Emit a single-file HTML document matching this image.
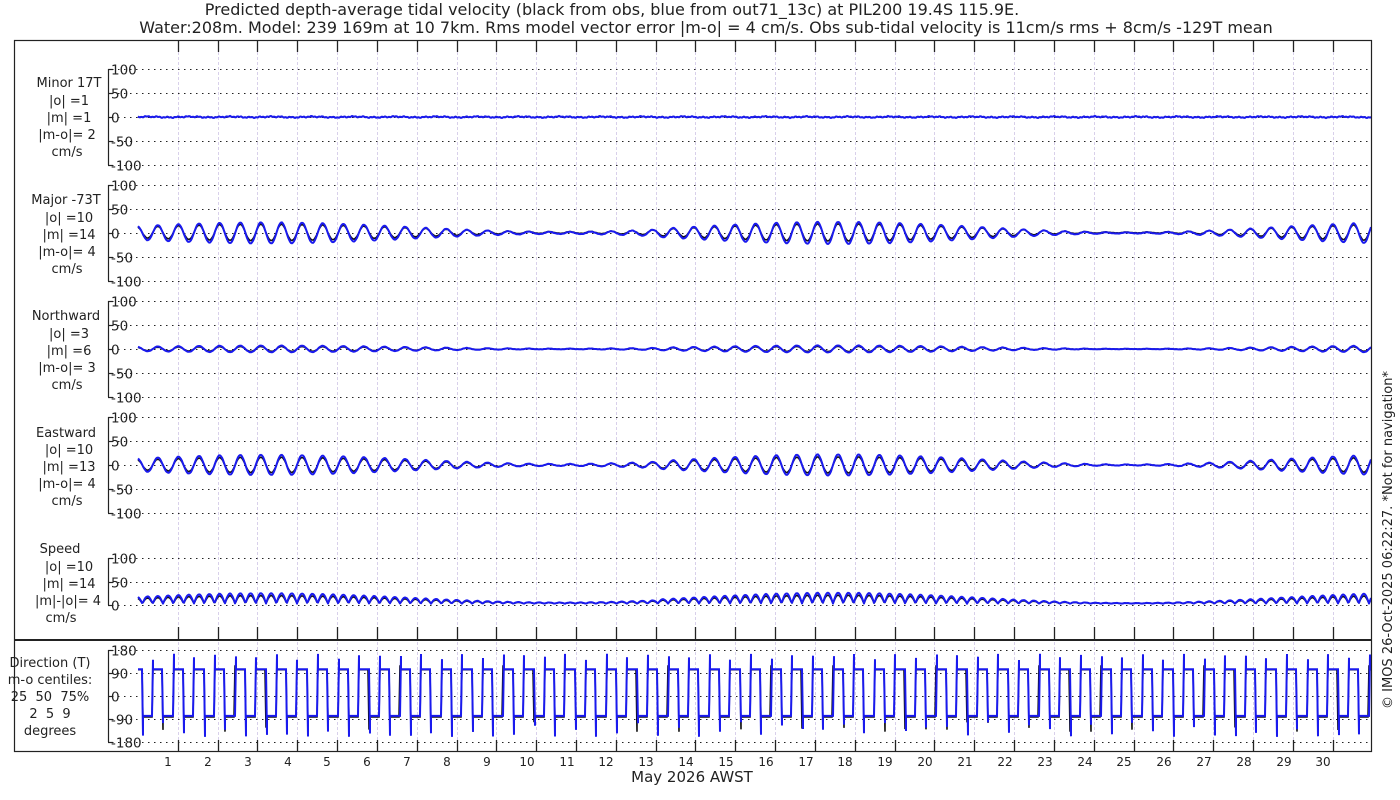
<!DOCTYPE html>
<html><head><meta charset="utf-8"><style>
html,body{margin:0;padding:0;background:#fff;width:1400px;height:800px;overflow:hidden}
svg{display:block;font-family:"DejaVu Sans","Liberation Sans",sans-serif}
</style></head><body>
<svg id="s" width="1400" height="800" viewBox="0 0 1400 800" xmlns="http://www.w3.org/2000/svg">
<rect width="1400" height="800" fill="#fff"/>
<g id="grid"></g>
<g id="data"></g>
<rect x="14.5" y="40.5" width="1357" height="711" fill="none" stroke="#222" stroke-width="1.2"/>
<line x1="14" y1="640" x2="1371" y2="640" stroke="#222" stroke-width="2"/>
<g id="axes" stroke="#222" fill="none"></g>
<g font-size="16" fill="#222" text-anchor="middle">
<text x="612" y="15">Predicted depth-average tidal velocity (black from obs, blue from out71_13c) at PIL200 19.4S 115.9E.</text>
<text x="706" y="33">Water:208m. Model: 239 169m at 10 7km. Rms model vector error |m-o| = 4 cm/s. Obs sub-tidal velocity is 11cm/s rms + 8cm/s -129T mean</text>
</g>
<g font-size="13" fill="#222" text-anchor="middle">
<text x="69" y="87">Minor 17T</text><text x="69" y="105">|o| =1</text><text x="69" y="122">|m| =1</text><text x="67" y="139">|m-o|= 2</text><text x="67" y="156">cm/s</text>
<text x="66" y="204">Major -73T</text><text x="69" y="222">|o| =10</text><text x="69" y="239">|m| =14</text><text x="67" y="256">|m-o|= 4</text><text x="67" y="273">cm/s</text>
<text x="66" y="320">Northward</text><text x="69" y="338">|o| =3</text><text x="69" y="355">|m| =6</text><text x="67" y="372">|m-o|= 3</text><text x="67" y="389">cm/s</text>
<text x="66" y="437">Eastward</text><text x="69" y="454">|o| =10</text><text x="69" y="471">|m| =13</text><text x="67" y="488">|m-o|= 4</text><text x="67" y="505">cm/s</text>
<text x="60" y="553">Speed</text><text x="69" y="571">|o| =10</text><text x="69" y="588">|m| =14</text><text x="68" y="605">|m|-|o|= 4</text><text x="61" y="622">cm/s</text>
<text x="50" y="667">Direction (T)</text><text x="50" y="684">m-o centiles:</text><text x="50" y="701" xml:space="preserve">25  50  75%</text><text x="50" y="718" xml:space="preserve">2  5  9</text><text x="50" y="735">degrees</text>
</g>
<g id="ylab" font-size="13.5" fill="#222"></g>
<g id="xlab" font-size="12" fill="#222" text-anchor="middle">
<text x="168" y="766">1</text><text x="208" y="766">2</text><text x="248" y="766">3</text><text x="288" y="766">4</text><text x="327" y="766">5</text><text x="367" y="766">6</text><text x="407" y="766">7</text><text x="447" y="766">8</text><text x="487" y="766">9</text><text x="527" y="766">10</text><text x="567" y="766">11</text><text x="606" y="766">12</text><text x="646" y="766">13</text><text x="686" y="766">14</text><text x="726" y="766">15</text><text x="766" y="766">16</text><text x="806" y="766">17</text><text x="845" y="766">18</text><text x="885" y="766">19</text><text x="925" y="766">20</text><text x="965" y="766">21</text><text x="1005" y="766">22</text><text x="1045" y="766">23</text><text x="1085" y="766">24</text><text x="1124" y="766">25</text><text x="1164" y="766">26</text><text x="1204" y="766">27</text><text x="1244" y="766">28</text><text x="1284" y="766">29</text><text x="1323" y="766">30</text>
</g>
<text x="692" y="782" font-size="15" fill="#222" text-anchor="middle">May 2026 AWST</text>
<text transform="translate(1392,540) rotate(-90)" font-size="13" fill="#222" text-anchor="middle">© IMOS 26-Oct-2025 06:22:27. *Not for navigation*</text>
</svg>
<script>
var NS="http://www.w3.org/2000/svg";
function el(p,t,a){var e=document.createElementNS(NS,t);for(var k in a)e.setAttribute(k,a[k]);p.appendChild(e);return e;}
var grid=document.getElementById('grid'),data=document.getElementById('data'),axes=document.getElementById('axes'),ylab=document.getElementById('ylab');
var X0=138,X1=1371,dpx=39.83,d1=177.7;
function dx(d){return d1+(d-1)*dpx;}
for(var d=1;d<=30;d++){var x=Math.round(dx(d))+0.5;
 el(grid,'line',{x1:x,y1:52,x2:x,y2:752,stroke:'#d8d0ea','stroke-width':1,'stroke-dasharray':'3,2'});
 el(axes,'line',{x1:x,y1:40,x2:x,y2:52,'stroke-width':1.3});
 el(axes,'line',{x1:x,y1:627,x2:x,y2:640,'stroke-width':1.3});
 el(axes,'line',{x1:x,y1:740,x2:x,y2:752,'stroke-width':1.3});
}
var panels=[[69,165,['100','50','0','-50','-100']],[185,281,['100','50','0','-50','-100']],[301,397,['100','50','0','-50','-100']],[417,513,['100','50','0','-50','-100']],[558,605,['100','50','0']],[650,742,['180','90','0','-90','-180']]];
panels.forEach(function(p){var n=p[2].length;
 el(axes,'line',{x1:108.5,y1:p[0],x2:108.5,y2:p[1],'stroke-width':1.2});
 for(var i=0;i<n;i++){var y=p[0]+(p[1]-p[0])*i/(n-1);y=Math.round(y)+0.5;
  el(axes,'line',{x1:108,y1:y,x2:113,y2:y,'stroke-width':1.2});
  el(grid,'line',{x1:112,y1:y,x2:1371,y2:y,stroke:'#222','stroke-width':1,'stroke-dasharray':'1.5,4.5'});
  var t=el(ylab,'text',{x:111,y:y+5});t.textContent=p[2][i];}
});
function amp2(t){var e=0.55+0.45*Math.cos(2*Math.PI*(t-3.2)/14.8);if(t>13)e=0.55+0.5*Math.cos(2*Math.PI*(t-17.5)/14.8);return e;}
var w=2*Math.PI*1.932;
function path(f,y0,sc,col,sw,noise){var s='';for(var x=X0;x<=X1;x+=1){var t=(x-d1)/dpx+1;var v=f(t);if(noise)v+=noise*(Math.sin(x*1.7)+Math.sin(x*0.61))*0.5;var y=y0-v*sc;s+=(x==X0?'M':'L')+x+' '+y.toFixed(1);}el(data,'path',{d:s,fill:'none',stroke:col,'stroke-width':sw,'stroke-linejoin':'round'});}
var sc=48/100;
var cols=[['#111',1.6],['#1a1aee',2]];
cols.forEach(function(c,i){path(function(t){return 0.8*Math.sin(w*t*0.5)*(i?1:0.6);},117,sc,c[0],c[1],1.5);});
cols.forEach(function(c,i){path(function(t){return (i?22:17)*amp2(t)*Math.cos(w*t+0.2)+(i?0:1);},233,sc,c[0],c[1],0.5);});
cols.forEach(function(c,i){path(function(t){return (i?7:5)*amp2(t)*Math.cos(w*t+0.2);},349,sc,c[0],c[1],0.4);});
cols.forEach(function(c,i){path(function(t){return (i?21:16)*amp2(t)*Math.cos(w*t+0.2);},465,sc,c[0],c[1],0.5);});
cols.forEach(function(c,i){path(function(t){return (i?22:17)*amp2(t)*Math.abs(Math.cos(w*t+0.2))+3;},605,47/100,c[0],c[1],0.3);});
var K=46/90;
cols.forEach(function(c,i){var s='';var prev=null;for(var x=X0;x<=X1;x++){var t=(x-d1)/dpx+1;var c2=Math.cos(w*t+0.2+(i?0:0.05));var v=c2>0?(i?105:103):(i?-78:-82);
 if(prev!==null&&((prev>0)!=(v>0))){var sp;if(v>0)sp=i?(140+25*Math.abs(Math.sin(x*0.37))):120;else sp=i?(-100-60*Math.abs(Math.sin(x*1.31))):(-100-40*Math.abs(Math.sin(x*0.9)));
  s+='L'+x+' '+(696-sp*K/2).toFixed(1);}
 var y=696-v*K/2;s+=(x==X0?'M':'L')+x+' '+y.toFixed(1);prev=v;}
 el(data,'path',{d:s,fill:'none',stroke:c[0],'stroke-width':c[1]});});
</script>
</body></html>
